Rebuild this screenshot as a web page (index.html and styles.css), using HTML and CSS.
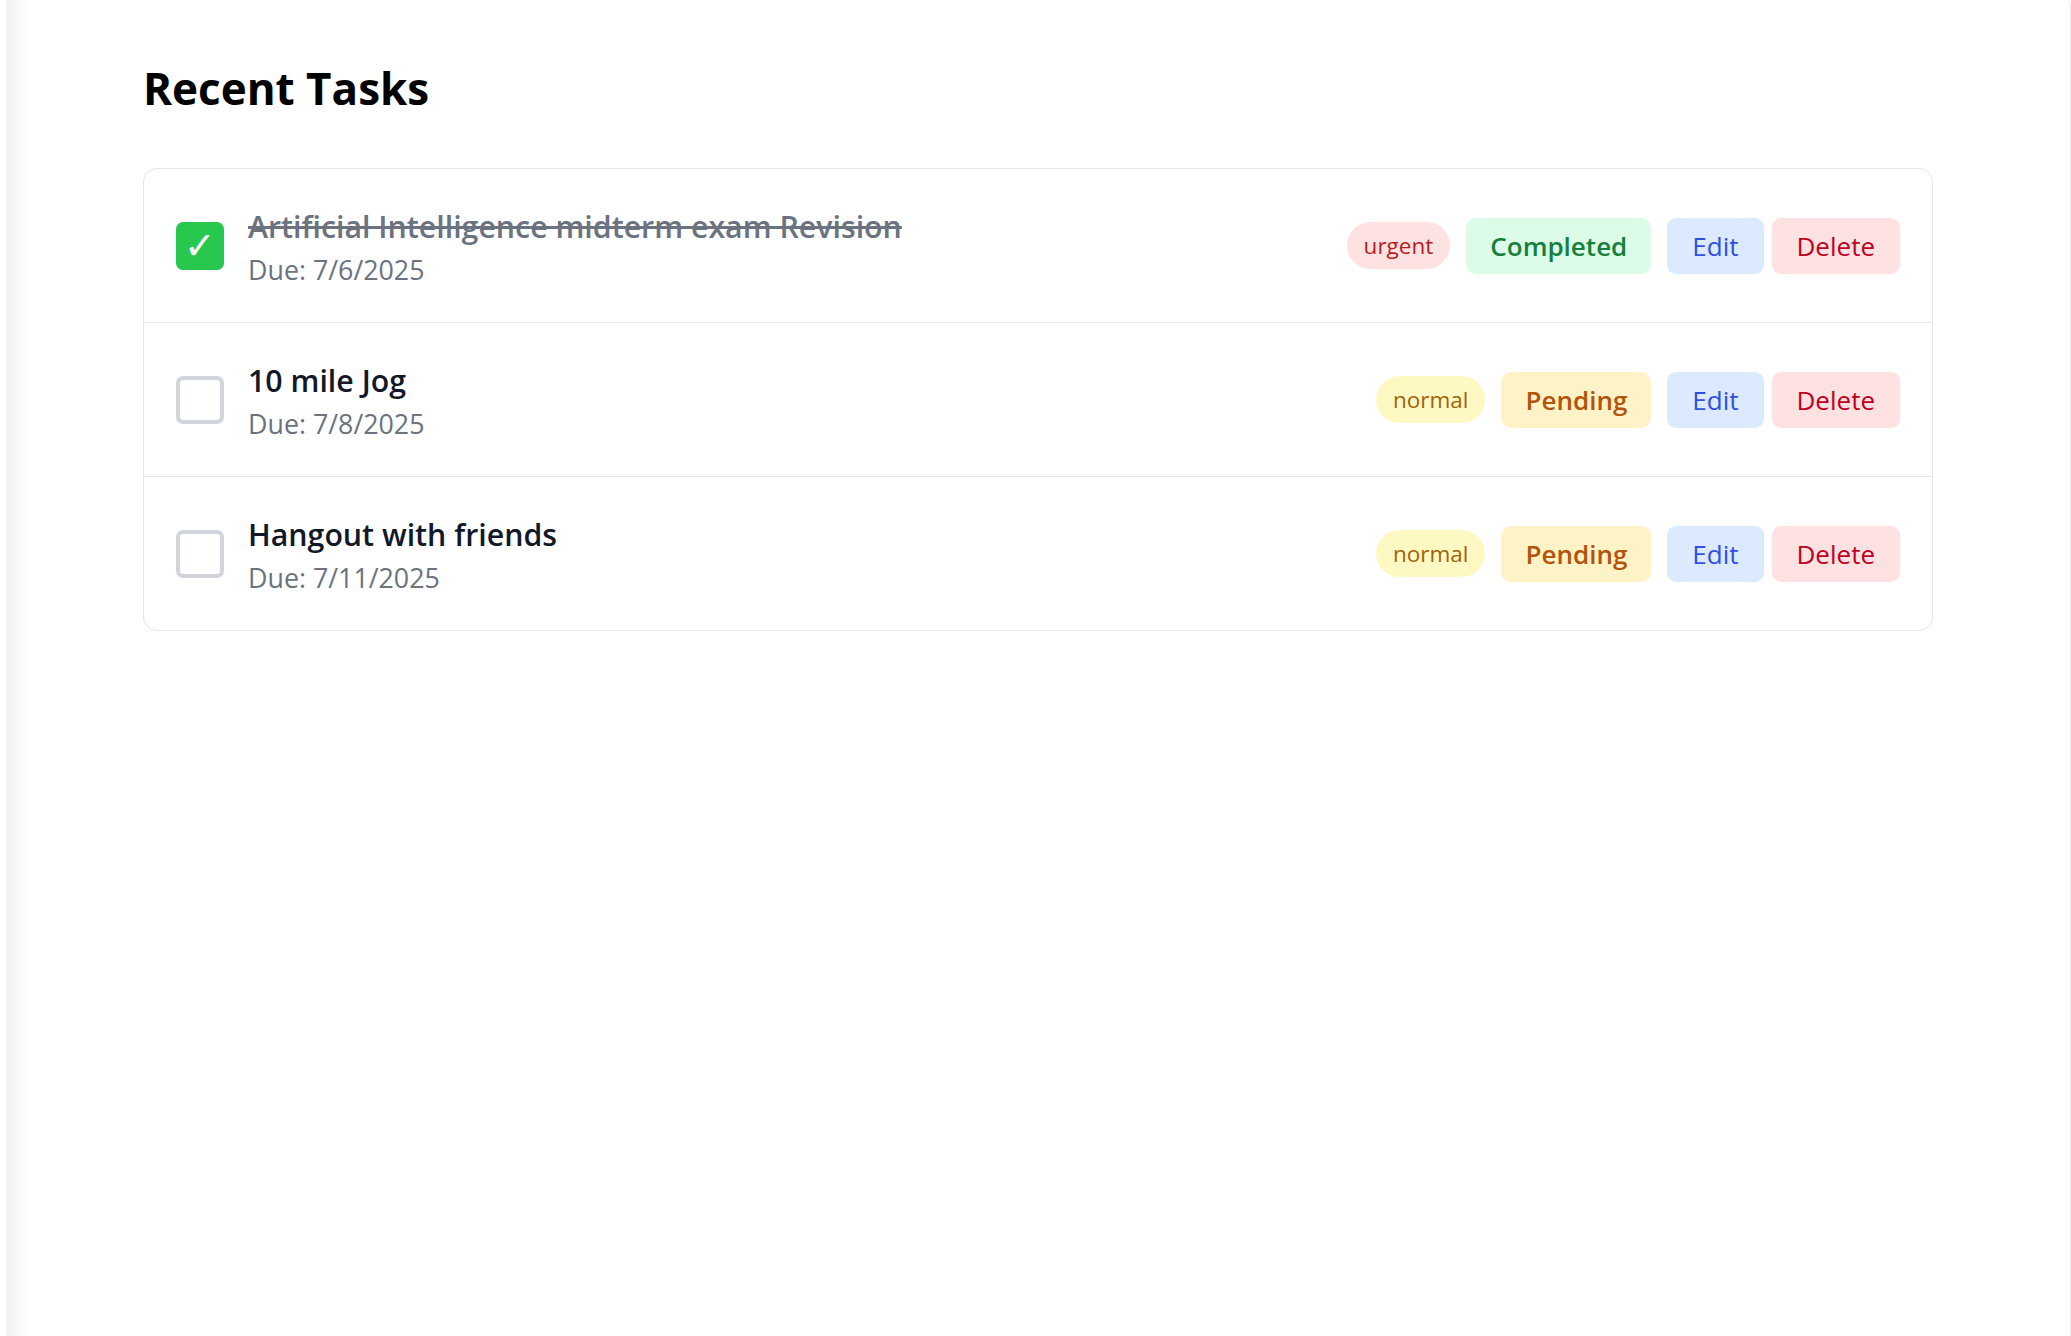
FILE: index.html
```html
<!DOCTYPE html>
<html lang="en">
<head>
<meta charset="utf-8">
<title>Recent Tasks</title>
<link rel="stylesheet" href="styles.css">
</head>
<body>
<main class="panel">
  <h1 class="heading">Recent Tasks</h1>
  <ul class="task-list">
    <li class="task">
      <div class="task-main">
        <span class="check check-on">✓</span>
        <div class="task-text">
          <div class="task-title done">Artificial Intelligence midterm exam Revision</div>
          <div class="task-due">Due: 7/6/2025</div>
        </div>
      </div>
      <div class="task-side">
        <span class="pill pill-urgent">urgent</span>
        <span class="status status-done">Completed</span>
        <div class="actions">
          <button class="btn btn-edit">Edit</button>
          <button class="btn btn-delete">Delete</button>
        </div>
      </div>
    </li>
    <li class="task">
      <div class="task-main">
        <span class="check"></span>
        <div class="task-text">
          <div class="task-title">10 mile Jog</div>
          <div class="task-due">Due: 7/8/2025</div>
        </div>
      </div>
      <div class="task-side">
        <span class="pill pill-normal">normal</span>
        <span class="status status-pending">Pending</span>
        <div class="actions">
          <button class="btn btn-edit">Edit</button>
          <button class="btn btn-delete">Delete</button>
        </div>
      </div>
    </li>
    <li class="task">
      <div class="task-main">
        <span class="check"></span>
        <div class="task-text">
          <div class="task-title">Hangout with friends</div>
          <div class="task-due">Due: 7/11/2025</div>
        </div>
      </div>
      <div class="task-side">
        <span class="pill pill-normal">normal</span>
        <span class="status status-pending">Pending</span>
        <div class="actions">
          <button class="btn btn-edit">Edit</button>
          <button class="btn btn-delete">Delete</button>
        </div>
      </div>
    </li>
  </ul>
</main>
</body>
</html>
```

FILE: styles.css
```css
html, body {
  margin: 0;
  padding: 0;
  background: #ffffff;
  overflow: hidden;
}

body {
  font-family: "Open Sans", "Noto Sans", sans-serif;
  color: #111827;
}

.panel {
  box-sizing: border-box;
  margin-left: 6px;
  height: 1336px;
  padding: 60px 137px 0 137px;
  border-right: 1px solid #e6e6ea;
  border-top-right-radius: 6px;
  background: linear-gradient(to right, #f1f1f2 0px, #f9f9f9 12px, #ffffff 26px);
}

.heading {
  margin: 0 0 52px 0;
  font-size: 44px;
  line-height: 56px;
  font-weight: 700;
  color: #000000;
}

.task-list {
  list-style: none;
  margin: 0;
  padding: 0;
  border: 1px solid #e5e7eb;
  border-radius: 14px;
}

.task {
  display: flex;
  align-items: center;
  justify-content: space-between;
  padding: 31px 32px 31px 32px;
  border-bottom: 1px solid #e5e7eb;
}

.task:last-child {
  border-bottom: none;
}

.task-main {
  display: flex;
  align-items: center;
  gap: 24px;
}

.check {
  box-sizing: border-box;
  width: 48px;
  height: 48px;
  border: 4px solid #d1d5db;
  border-radius: 7px;
  background: #ffffff;
  display: flex;
  align-items: center;
  justify-content: center;
}

.check-on {
  border: none;
  background: #28c84f;
  color: #ffffff;
  font-family: "DejaVu Sans", sans-serif;
  font-size: 38px;
  line-height: 1;
}

.task-text {
  display: flex;
  flex-direction: column;
}

.task-title {
  font-size: 30.3px;
  line-height: 54px;
  font-weight: 600;
  color: #111827;
}

.task-title.done {
  color: #6b7280;
  text-decoration: line-through;
  text-decoration-thickness: 3px;
}

.task-due {
  margin-top: -5px;
  font-size: 26.8px;
  line-height: 42px;
  color: #6b7280;
}

.task-side {
  display: flex;
  align-items: center;
  gap: 16px;
}

.pill {
  padding: 6px 17px;
  font-size: 22.5px;
  line-height: 35px;
  border-radius: 999px;
}

.pill-urgent {
  background: #fee2e2;
  color: #b91c1c;
}

.pill-normal {
  background: #fef9c3;
  color: #a16207;
}

.status {
  padding: 7px 24px;
  font-size: 26px;
  line-height: 42px;
  font-weight: 600;
  border-radius: 10px;
}

.status-done {
  background: #dcfce7;
  color: #15803d;
}

.status-pending {
  background: #fef3c7;
  color: #b45309;
}

.actions {
  display: flex;
  gap: 8px;
}

.btn {
  border: none;
  margin: 0;
  padding: 7px 25px;
  font-family: "Open Sans", "Noto Sans", sans-serif;
  font-size: 26px;
  line-height: 42px;
  border-radius: 9px;
  cursor: pointer;
}

.btn-edit {
  background: #dbeafe;
  color: #2f4fe6;
}

.btn-delete {
  background: #fee2e2;
  color: #c0001f;
}
```
